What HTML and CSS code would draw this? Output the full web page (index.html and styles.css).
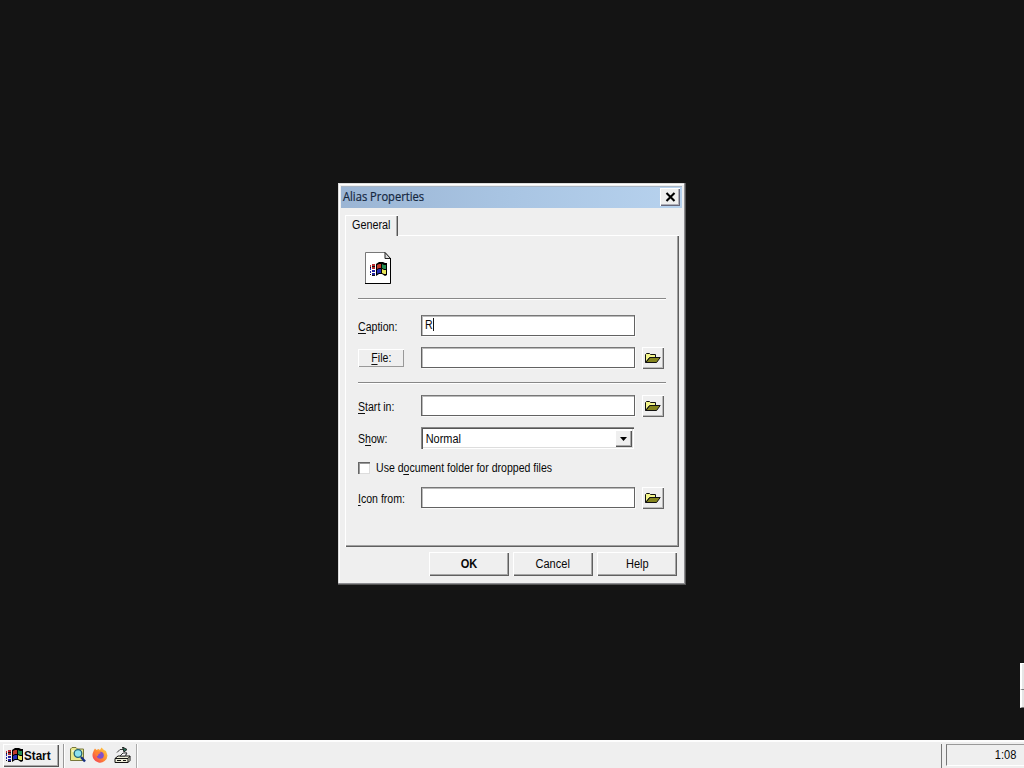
FILE: index.html
```html
<!DOCTYPE html>
<html lang="en">
<head>
<meta charset="utf-8">
<title>Alias Properties</title>
<link rel="stylesheet" href="styles.css">
</head>
<body>
<svg class="defs" width="0" height="0" aria-hidden="true">
  <symbol id="flag" viewBox="0 0 17 15">
    <path fill="#000" d="M6 2l3-2h4l2 1h2v12l-2 1-3-2H9l-3 2z"/>
    <path fill="#c33c2c" d="M7 3l2-1h2v4H9L7 7z"/>
    <path fill="#248c52" d="M12 2l2 1h2v4h-2l-2-1z"/>
    <path fill="#2630b8" d="M7 8l2-1h2v4H9l-2 1z"/>
    <path fill="#e8e659" d="M12 7l2 1h2v4h-2l-2-1z"/>
    <path fill="#b92c32" d="M0 3h1v2H0zM2 2h3v2H2zM2 5h3v2H2z"/>
    <path fill="#2222a0" d="M0 6h1v2H0zM0 9h1v2H0zM2 8h3v2H2zM2 11h3v2H2z"/>
    <path fill="#111" d="M0 5h1v1H0zM2 4h3v1H2zM0 12h1v1H0zM2 13h3v1H2z"/>
  </symbol>
  <symbol id="folder" viewBox="0 0 16 11">
    <path fill="#f4f68c" stroke="#111" d="M.5 9.5v-8l1-1h3l1 1h5v3h-6z"/>
    <path fill="#85851c" stroke="#111" d="M.8 9.500L5 4.500h10.200l-3.600 5z"/>
  </symbol>
</svg>
<main class="desktop">
  <section class="dialog">
    <header class="titlebar">
      <span class="title">Alias Properties</span>
      <button class="close"><svg width="11" height="10" viewBox="0 0 11 10"><path d="M1.5 1l8 8M9.5 1l-8 8" stroke="#000" stroke-width="2.1"/></svg></button>
    </header>
    <div class="tabs"><div class="tab"><span class="txt">General</span></div></div>
    <div class="panel">
      <div class="preview">
        <svg width="27" height="33" viewBox="0 0 27 33">
          <path d="M.5.5H20l5.500 6v25H.5z" fill="#fff" stroke="#777"/>
          <path d="M20 .5v6h5.500z" fill="#ddd" stroke="#222"/>
          <path d="M0 31.500h25.500V6" fill="none" stroke="#000"/>
          <use href="#flag" x="5" y="10" width="17" height="15"/>
        </svg>
      </div>
      <div class="row caption"><label class="txt"><u>C</u>aption:</label><div class="field"><span class="txt">R</span><i class="caret"></i></div></div>
      <div class="row file"><button class="filebtn"><span class="txt"><u>F</u>ile:</span></button><div class="field"></div><button class="browse"><svg width="16" height="11"><use href="#folder"/></svg></button></div>
      <div class="rule"></div>
      <div class="row start"><label class="txt"><u>S</u>tart in:</label><div class="field"></div><button class="browse"><svg width="16" height="11"><use href="#folder"/></svg></button></div>
      <div class="row show"><label class="txt">S<u>h</u>ow:</label><div class="field select"><span class="txt">Normal</span><span class="drop"><svg width="7" height="4"><path d="M0 0h7L3.5 4z"/></svg></span></div></div>
      <div class="check"><span class="box"></span><span class="txt">Use d<u>o</u>cument folder for dropped files</span></div>
      <div class="row icon"><label class="txt"><u>I</u>con from:</label><div class="field"></div><button class="browse"><svg width="16" height="11"><use href="#folder"/></svg></button></div>
    </div>
    <footer class="actions">
      <button class="action ok"><span class="txt">OK</span></button>
      <button class="action"><span class="txt">Cancel</span></button>
      <button class="action"><span class="txt">Help</span></button>
    </footer>
  </section>
  <aside class="edge"><i></i><i></i></aside>
</main>
<nav class="taskbar">
  <button class="startbtn"><svg width="17" height="15"><use href="#flag"/></svg><span class="starttext">Start</span></button>
  <div class="quick">
    <svg width="16" height="16" viewBox="0 0 16 16">
      <path d="M.5 13.500V2l1.500-1.500h4L7.500 2h6v11.500z" fill="#e9e98b" stroke="#77773a"/>
      <path d="M2 4h10" stroke="#fff"/>
      <circle cx="8" cy="6.500" r="3.800" fill="#8de2ef" stroke="#246578" stroke-width="1.300"/>
      <path d="M11 10l4 4.500" stroke="#142e80" stroke-width="2.400"/>
    </svg>
    <svg width="16" height="16" viewBox="0 0 16 16">
      <defs><linearGradient id="fire" x1="1" y1="0" x2="0" y2="1"><stop offset="0" stop-color="#ffda45"/><stop offset=".5" stop-color="#ff8b31"/><stop offset="1" stop-color="#f1325e"/></linearGradient></defs>
      <path d="M2 3l1-1.500L4.500 3l2-1L8 3l1.500-2.500L12 3l2 1 1.500 4.500A7.500 7.500 0 1 1 1 5.500z" fill="url(#fire)"/>
      <circle cx="8.300" cy="8.300" r="3.500" fill="#8050cb"/>
      <path d="M3 5l4-.5 2 1.500-2.500 1L6 9c-2 0-3-2-3-4z" fill="#ff8034"/>
    </svg>
    <svg width="17" height="17" viewBox="0 0 17 17">
      <path d="M1 11.500L4 9h12v4.500l-2 2H1z" fill="#eeeed8" stroke="#111"/>
      <path d="M1 11.500h13l2-2.500M14 11.500v4" fill="none" stroke="#111"/>
      <path d="M3 13.500h4M9 13.500h3" stroke="#111"/>
      <path d="M3 5.500l3-3h5M12 5.500v3" fill="none" stroke="#333"/>
      <path d="M8.500 0l4.500 2.500-3 2.500z" fill="#28765c" stroke="#222"/>
      <path d="M6 9l3-3h4l-2 3z" fill="#fff" stroke="#333"/>
    </svg>
  </div>
  <div class="tasks"></div>
  <div class="tray"><span class="txt">1:08</span></div>
</nav>
</body>
</html>
```

FILE: styles.css
```css
* { box-sizing: border-box; }
body { margin: 0; width: 1024px; height: 768px; overflow: hidden; display: flex; flex-direction: column; background: #141414; color: #080808; font: 12px/14px "Liberation Sans", Arial, sans-serif; }
button { padding: 0; border: 0; background: #efefef; color: inherit; font: inherit; display: flex; align-items: center; justify-content: center; }
svg { display: block; flex: none; }
u { text-decoration: none; box-shadow: 0 -1px 0 #111 inset; }
.defs { position: absolute; }
.txt { display: inline-block; white-space: nowrap; transform: scaleX(.88); transform-origin: left; }
.desktop { height: 740px; position: relative; padding: 183px 0 0 338px; }
.dialog { width: 348px; height: 402px; padding: 3px 4px 0 3px; background: #efefef; box-shadow: inset -1px -1px #555, inset -2px -2px #8c8c90, inset 1px 1px #ddd, inset 2px 2px #fff; }
.titlebar { height: 22px; padding: 0 2px 1px 2px; display: flex; align-items: center; justify-content: space-between; border-top: 1px solid #aab6c4; background: linear-gradient(90deg, #9bb5d4, #a9c5e3 50%, #b7d2ee); }
.title { font: 12px/16px "Open Sans", sans-serif; color: #14263e; white-space: nowrap; transform: scaleX(.93); transform-origin: left; -webkit-text-stroke: .2px #14263e; }
.close { width: 20px; height: 18px; box-shadow: inset 1px 1px #fff, inset -1px -1px #68687a, inset -2px -2px #b0b0b8; }
.tabs { padding: 7px 0 0 4px; height: 27px; }
.tab { width: 53px; height: 21px; padding: 2px 0 0 6px; background: #efefef; border-top: 1px solid #fff; border-left: 1px solid #fff; box-shadow: inset -1px 0 #555, inset -2px 0 #aaa; position: relative; }
.tab .txt { transform: scaleX(.9); }
.panel { margin-left: 4px; width: 334px; height: 312px; padding: 16px 13px 0 12px; border-left: 1px solid #fff; border-top: 1px solid #fff; box-shadow: inset -1px -1px #606060, inset -2px -2px #a0a0a0; }
.preview { height: 47px; padding-left: 7px; border-bottom: 1px solid #888; box-shadow: 0 1px #fff; }
.row { display: grid; grid-template-columns: 63px 214px 29px; align-items: center; height: 22px; }
.row > .browse { margin-left: 7px; }
.caption { margin-top: 16px; }
.file { margin-top: 10px; }
.rule { height: 1px; margin-top: 13px; background: #888; box-shadow: 0 1px #fff; }
.start { margin-top: 12px; }
.show { margin-top: 10px; }
.icon { margin-top: 12px; }
.row > label { padding-top: 1px; }
.field { width: 214px; height: 21px; align-self: start; background: #fff; border: 1px solid #626262; border-top-color: #777; box-shadow: inset 1px 1px #bbb, 1px 1px #fafafa; display: flex; padding: 2px 0 0 3px; }
.caret { width: 1px; height: 13px; margin: 0 0 0 -1px; background: #111; }
.filebtn { width: 46px; height: 18px; box-shadow: inset 1px 1px #fff, inset -1px -1px #999; }
.filebtn .txt, .action .txt { transform-origin: center; }
.action .txt { transform: scaleX(.92); }
.browse { width: 22px; height: 22px; box-shadow: inset 1px 1px #fff, inset -1px -1px #666, inset -2px -2px #bbb; }
.select { width: 213px; height: 22px; border: 0; box-shadow: inset 1px 1px #888, inset 2px 2px #555, inset -1px -1px #fff, inset -2px -2px #ddd; padding: 2px; justify-content: space-between; }
.select .txt { padding: 3px 0 0 3px; transform: scaleX(.91); }
.drop { width: 17px; height: 17px; margin-top: 1px; display: flex; align-items: center; justify-content: center; background: #efefef; box-shadow: inset 1px 1px #fff, inset -1px -1px #555, inset -2px -2px #aaa; }
.check { margin-top: 12px; height: 14px; display: flex; align-items: center; gap: 6px; }
.box { width: 12px; height: 12px; background: #fff; box-shadow: inset 1px 1px #666, inset 2px 2px #999, inset -1px -1px #ddd; }
.actions { margin: 5px 0 0 88px; display: flex; gap: 4px; }
.action { width: 80px; height: 24px; box-shadow: inset 1px 1px #fff, inset -1px -1px #606060, inset -2px -2px #a6a6a6; }
.ok { font-weight: bold; }
.edge { position: absolute; right: 0; top: 663px; width: 4px; height: 45px; display: flex; flex-direction: column; }
.edge i { flex: 18; background: #e5e5e5; border-left: 2px solid #fff; border-bottom: 1px solid #777; }
.edge i:first-child { flex: 27; border-top: 1px solid #fff; }
.taskbar { height: 28px; background: #efefef; border-top: 2px solid #fdfdfd; display: flex; }
.startbtn { width: 56px; height: 23px; margin: 2px 0 0 3px; padding: 0 0 0 3px; gap: 1px; justify-content: flex-start; font-weight: bold; box-shadow: inset 1px 1px #fff, inset -1px -1px #555, inset -2px -2px #aaa; }
.starttext { transform: scaleX(.97); transform-origin: left; }
.quick { margin: 2px 0 0 4px; width: 74px; border-left: 1px solid #999; border-right: 1px solid #aaa; box-shadow: inset 1px 0 #fff, 1px 0 #fff; padding: 3px 0 0 6px; display: flex; gap: 6px; }
.tasks { flex: 1; border-right: 1px solid #777; margin: 2px 4px 0 0; }
.tray { width: 78px; margin-top: 2px; height: 22px; border-top: 1px solid #999; border-left: 1px solid #777; border-bottom: 1px solid #fff; padding: 3px 8px 0 0; text-align: right; }
.tray .txt { transform: scaleX(.92); transform-origin: right; }
```
